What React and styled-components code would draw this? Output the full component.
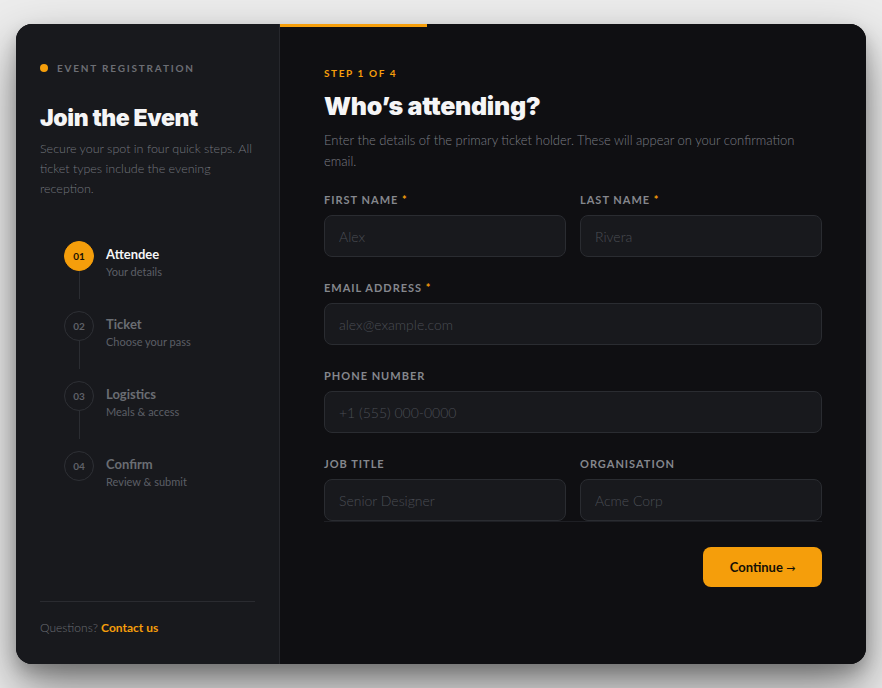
import React from "react"
import styled, { createGlobalStyle } from "styled-components"

const GlobalStyle = createGlobalStyle`
  * { box-sizing: border-box; }
  html, body {
    margin: 0;
    padding: 0;
    background: #ececec;
    font-family: Lato, "Open Sans", "Noto Sans", sans-serif;
  }
  body {
    padding: 24px 16px;
  }
`

const steps = [
  { n: "01", title: "Attendee", sub: "Your details" },
  { n: "02", title: "Ticket", sub: "Choose your pass" },
  { n: "03", title: "Logistics", sub: "Meals & access" },
  { n: "04", title: "Confirm", sub: "Review & submit" },
]

export default function App() {
  return (
    <>
      <GlobalStyle />
      <Card>
        <Sidebar>
          <Eyebrow>
            <Dot />
            Event Registration
          </Eyebrow>
          <SideTitle>Join the Event</SideTitle>
          <SideText>
            Secure your spot in four quick steps. All ticket types include the
            evening reception.
          </SideText>
          <Steps>
            {steps.map((s, i) => (
              <Step key={s.n}>
                <Marker>
                  <Circle $active={i === 0}>{s.n}</Circle>
                  {i < steps.length - 1 && <Connector />}
                </Marker>
                <StepText>
                  <StepTitle $active={i === 0}>{s.title}</StepTitle>
                  <StepSub>{s.sub}</StepSub>
                </StepText>
              </Step>
            ))}
          </Steps>
          <SideFooter>
            Questions? <ContactLink href="#">Contact us</ContactLink>
          </SideFooter>
        </Sidebar>
        <Main>
          <Progress>
            <ProgressFill style={{ width: `${(1 / 4) * 100}%` }} />
          </Progress>
          <StepLabel>Step 1 of 4</StepLabel>
          <Heading>Who’s attending?</Heading>
          <Intro>
            Enter the details of the primary ticket holder. These will appear on
            your confirmation email.
          </Intro>
          <Fields>
            <Row $cols={2}>
              <Field>
                <Label>First name <Req>*</Req></Label>
                <Input placeholder="Alex" />
              </Field>
              <Field>
                <Label>Last name <Req>*</Req></Label>
                <Input placeholder="Rivera" />
              </Field>
            </Row>
            <Row $cols={1}>
              <Field>
                <Label>Email address <Req>*</Req></Label>
                <Input placeholder="alex@example.com" />
              </Field>
            </Row>
            <Row $cols={1}>
              <Field>
                <Label>Phone number</Label>
                <Input placeholder="+1 (555) 000-0000" />
              </Field>
            </Row>
            <Row $cols={2}>
              <Field>
                <Label>Job title</Label>
                <Input placeholder="Senior Designer" />
              </Field>
              <Field>
                <Label>Organisation</Label>
                <Input placeholder="Acme Corp" />
              </Field>
            </Row>
          </Fields>
          <Actions>
            <PrimaryButton>
              Continue <Arrow>→</Arrow>
            </PrimaryButton>
          </Actions>
        </Main>
      </Card>
    </>
  )
}

const Card = styled.div`
  display: flex;
  height: 640px;
  border-radius: 16px;
  overflow: hidden;
  background: #0f0f12;
  box-shadow: 0 24px 50px rgba(0, 0, 0, 0.45), 0 8px 16px rgba(0, 0, 0, 0.2);
`

const Sidebar = styled.aside`
  width: 264px;
  flex-shrink: 0;
  display: flex;
  flex-direction: column;
  padding: 38px 24px 29px;
  background: #18191d;
  border-right: 1px solid #26272c;
`

const Eyebrow = styled.div`
  display: flex;
  align-items: center;
  gap: 9px;
  font-size: 10px;
  font-weight: 700;
  letter-spacing: 1.8px;
  text-transform: uppercase;
  color: #6c6e74;
`

const Dot = styled.span`
  width: 8px;
  height: 8px;
  border-radius: 50%;
  background: #f59e0b;
`

const SideTitle = styled.h1`
  margin: 30px 0 0;
  font-family: Inter, Lato, sans-serif;
  font-size: 23px;
  font-weight: 900;
  color: #f5f5f6;
  letter-spacing: -0.4px;
`

const SideText = styled.p`
  margin: 7px 0 0;
  font-size: 12.5px;
  font-weight: 300;
  line-height: 20px;
  color: #72757c;
`

const Steps = styled.div`
  display: flex;
  flex-direction: column;
  margin-top: 42px;
  padding-left: 24px;
`

const Step = styled.div`
  display: flex;
  gap: 12px;
  height: 70px;
`

const Marker = styled.div`
  display: flex;
  flex-direction: column;
  align-items: center;
  width: 30px;
`

const Circle = styled.div`
  width: 30px;
  height: 30px;
  border-radius: 50%;
  display: flex;
  align-items: center;
  justify-content: center;
  font-size: 10px;
  font-weight: 700;
  color: ${(p) => (p.$active ? "#1a1204" : "#5f6168")};
  background: ${(p) => (p.$active ? "#f59e0b" : "transparent")};
  border: 1px solid ${(p) => (p.$active ? "#f59e0b" : "#2e3035")};
`

const Connector = styled.div`
  width: 1px;
  height: 28px;
  background: #2b2d32;
`

const StepText = styled.div`
  display: flex;
  flex-direction: column;
  padding-top: 5px;
`

const StepTitle = styled.div`
  font-size: 13px;
  font-weight: 700;
  color: ${(p) => (p.$active ? "#f5f5f6" : "#6a6d73")};
`

const StepSub = styled.div`
  margin-top: 3px;
  font-size: 11px;
  color: #5c5f66;
`

const SideFooter = styled.div`
  margin-top: auto;
  padding-top: 18px;
  border-top: 1px solid #2a2b30;
  font-size: 12px;
  font-weight: 300;
  color: #6a6d73;
`

const ContactLink = styled.a`
  color: #f59e0b;
  font-weight: 700;
  text-decoration: none;
`

const Main = styled.main`
  position: relative;
  flex: 1;
  display: flex;
  flex-direction: column;
  padding: 43px 44px 0;
  background: #0f0f12;
`

const Progress = styled.div`
  position: absolute;
  top: 0;
  left: 0;
  right: 0;
  height: 3px;
`

const ProgressFill = styled.div`
  height: 100%;
  background: #f59e0b;
`

const StepLabel = styled.div`
  font-size: 10px;
  font-weight: 700;
  letter-spacing: 1.6px;
  text-transform: uppercase;
  color: #f59e0b;
`

const Heading = styled.h2`
  margin: 12px 0 0;
  font-family: Inter, Lato, sans-serif;
  font-size: 25px;
  font-weight: 900;
  color: #f5f5f6;
  letter-spacing: -0.3px;
`

const Intro = styled.p`
  margin: 9px 0 0;
  font-size: 13px;
  font-weight: 300;
  line-height: 21px;
  color: #7a7d84;
`

const Fields = styled.div`
  display: flex;
  flex-direction: column;
  gap: 24px;
  margin-top: 21px;
  border-bottom: 1px solid #1e1f24;
`

const Row = styled.div`
  display: grid;
  grid-template-columns: repeat(${(p) => p.$cols}, 1fr);
  gap: 14px;
`

const Field = styled.label`
  display: flex;
  flex-direction: column;
  gap: 9px;
`

const Label = styled.span`
  font-size: 11px;
  font-weight: 700;
  letter-spacing: 1px;
  text-transform: uppercase;
  color: #85878d;
`

const Req = styled.span`
  color: #f59e0b;
`

const Input = styled.input`
  height: 42px;
  padding: 0 14px;
  border-radius: 8px;
  border: 1px solid #2a2c31;
  background: #18191d;
  color: #e5e5e7;
  font-family: inherit;
  font-size: 14px;
  font-weight: 300;
  outline: none;
  &::placeholder {
    color: #4a4d54;
  }
`

const Actions = styled.div`
  display: flex;
  justify-content: flex-end;
  margin-top: 25px;
`

const PrimaryButton = styled.button`
  width: 119px;
  height: 40px;
  border: none;
  border-radius: 8px;
  background: #f59e0b;
  color: #141006;
  font-family: inherit;
  font-size: 13px;
  font-weight: 700;
  cursor: pointer;
`

const Arrow = styled.span`
  font-family: "DejaVu Sans", sans-serif;
  font-weight: 400;
  font-size: 11px;
`
